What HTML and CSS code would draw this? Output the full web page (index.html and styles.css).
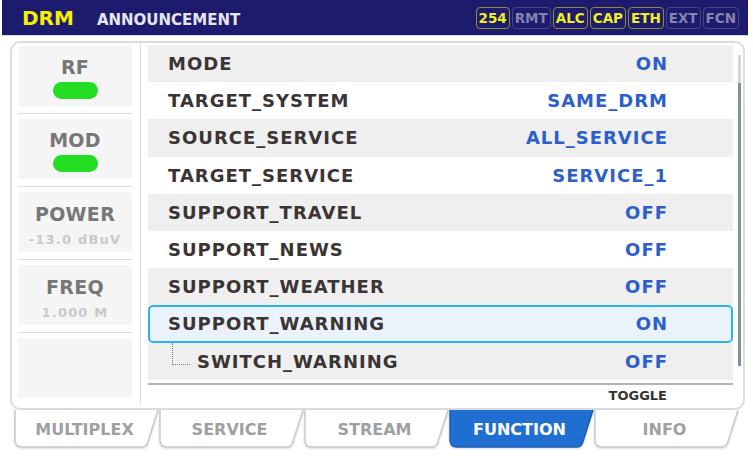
FILE: index.html
```html
<!DOCTYPE html>
<html lang="en">
<head>
    <meta charset="UTF-8">
    <meta name="viewport" content="width=device-width, initial-scale=1.0">
    <title>DRM Announcement</title>
    <link rel="stylesheet" href="styles.css">
</head>
<body>
    <header class="topbar">
        <span class="title">DRM</span>
        <span class="subtitle">ANNOUNCEMENT</span>
        <div class="badges">
            <span class="badge on">254</span>
            <span class="badge">RMT</span>
            <span class="badge on">ALC</span>
            <span class="badge on">CAP</span>
            <span class="badge on">ETH</span>
            <span class="badge">EXT</span>
            <span class="badge">FCN</span>
        </div>
    </header>

    <main class="panel">
        <aside class="status">
            <div class="slot">
                <div class="card led-card">
                    <span class="card-label">RF</span>
                    <span class="led"></span>
                </div>
            </div>
            <div class="slot">
                <div class="card led-card">
                    <span class="card-label">MOD</span>
                    <span class="led"></span>
                </div>
            </div>
            <div class="slot">
                <div class="card info-card">
                    <span class="card-label">POWER</span>
                    <span class="card-value">-13.0 dBuV</span>
                </div>
            </div>
            <div class="slot">
                <div class="card info-card">
                    <span class="card-label">FREQ</span>
                    <span class="card-value">1.000 M</span>
                </div>
            </div>
            <div class="slot">
                <div class="card"></div>
            </div>
        </aside>

        <section class="list">
            <div class="row"><span>MODE</span><span class="val">ON</span></div>
            <div class="row"><span>TARGET_SYSTEM</span><span class="val">SAME_DRM</span></div>
            <div class="row"><span>SOURCE_SERVICE</span><span class="val">ALL_SERVICE</span></div>
            <div class="row"><span>TARGET_SERVICE</span><span class="val">SERVICE_1</span></div>
            <div class="row"><span>SUPPORT_TRAVEL</span><span class="val">OFF</span></div>
            <div class="row"><span>SUPPORT_NEWS</span><span class="val">OFF</span></div>
            <div class="row"><span>SUPPORT_WEATHER</span><span class="val">OFF</span></div>
            <div class="row sel"><span>SUPPORT_WARNING</span><span class="val">ON</span></div>
            <div class="row sub"><span class="branch"></span><span>SWITCH_WARNING</span><span class="val">OFF</span></div>
            <div class="rule"></div>
            <div class="hint">TOGGLE</div>
        </section>

        <div class="scroll"><div class="thumb"></div></div>
    </main>

    <nav class="tabs">
        <div class="tab">
            <svg width="145" height="38" viewBox="0 0 145 38"><path d="M1 0 V30 Q1 37 8 37 H128 Q132 37 133.5 33 L144 0"/></svg>
            <span class="tab-label">MULTIPLEX</span>
        </div>
        <div class="tab">
            <svg width="145" height="38" viewBox="0 0 145 38"><path d="M1 0 V30 Q1 37 8 37 H128 Q132 37 133.5 33 L144 0"/></svg>
            <span class="tab-label">SERVICE</span>
        </div>
        <div class="tab">
            <svg width="145" height="38" viewBox="0 0 145 38"><path d="M1 0 V30 Q1 37 8 37 H128 Q132 37 133.5 33 L144 0"/></svg>
            <span class="tab-label">STREAM</span>
        </div>
        <div class="tab active">
            <svg width="145" height="38" viewBox="0 0 145 38"><path d="M1 0 V30 Q1 37 8 37 H128 Q132 37 133.5 33 L144 0"/></svg>
            <span class="tab-label">FUNCTION</span>
        </div>
        <div class="tab">
            <svg width="145" height="38" viewBox="0 0 145 38"><path d="M1 0 V30 Q1 37 8 37 H128 Q132 37 133.5 33 L144 0"/></svg>
            <span class="tab-label">INFO</span>
        </div>
    </nav>
</body>
</html>
```

FILE: styles.css
```css
body {
    margin: 0;
    width: 753px;
    height: 458px;
    overflow: hidden;
    background: #fff;
    font-family: "DejaVu Sans", Verdana, sans-serif;
    font-weight: bold;
}

/* top bar */
.topbar {
    display: flex;
    align-items: center;
    height: 35px;
    margin: 0 5px 0 2px;
    padding-left: 20px;
    background: #1d1b6e;
    border-bottom: 1px solid #d8d8e4;
}

.title {
    color: #f4f000;
    font-size: 20px;
    margin-right: 23px;
}

.subtitle {
    color: #e6e6ee;
    font-size: 15px;
    margin-top: 5px;
}

.badges {
    display: flex;
    gap: 2px;
    margin-left: auto;
    margin-right: 9px;
}

.badge {
    font-size: 13.5px;
    line-height: 20px;
    padding: 0 2px;
    border: 1px solid #47467e;
    border-radius: 4px;
    color: #8584ad;
}

.badge.on {
    color: #f2ef1c;
    border-color: #8e8b3c;
}

/* main panel */
.panel {
    display: flex;
    box-sizing: border-box;
    width: 735px;
    height: 369px;
    margin: 5px 0 0 10px;
    border: 2px solid #dcdcdc;
    border-radius: 10px;
}

.status {
    width: 114px;
    padding: 3px 8px 0 6px;
    margin-bottom: 4px;
    border-right: 1px solid #dedede;
}

.slot {
    padding-bottom: 7px;
    margin-bottom: 5px;
    border-bottom: 1px solid #dcdcdc;
}

.slot:last-child {
    padding: 0;
    margin: 0;
    border: none;
}

.card {
    display: flex;
    flex-direction: column;
    align-items: center;
    height: 60px;
    box-sizing: border-box;
    background: #f5f5f5;
    border-radius: 3px;
}

.led-card {
    justify-content: flex-end;
    gap: 5px;
    padding-bottom: 7px;
}

.info-card {
    justify-content: center;
    gap: 9px;
    padding-top: 6px;
}

.card-label {
    color: #777;
    font-size: 19px;
    line-height: 20px;
    letter-spacing: 0.3px;
}

.card-value {
    color: #c9c9c9;
    font-size: 13px;
    line-height: 14px;
    letter-spacing: 1.2px;
}

.led {
    width: 45px;
    height: 17px;
    border-radius: 9px;
    background: #22dd22;
}

/* settings list */
.list {
    width: 585px;
    margin: 2px 0 0 7px;
}

.row {
    display: flex;
    align-items: center;
    box-sizing: border-box;
    height: 37.2px;
    padding: 0 65px 0 20px;
    font-size: 18px;
    letter-spacing: 1px;
    color: #3b3434;
}

.row:nth-child(odd) {
    background: #efefef;
}

.row .val {
    margin-left: auto;
    color: #2c5fcc;
}

.row.sel {
    padding: 0 63px 0 18px;
    background: #eaf2fb;
    border: 2px solid #2ab2f2;
    border-radius: 5px;
}

.row.sub {
    padding-left: 24px;
}

.branch {
    align-self: flex-start;
    width: 17px;
    height: 21px;
    margin-right: 7px;
    border-left: 1px dotted #777;
    border-bottom: 1px dotted #777;
}

.rule {
    height: 2px;
    margin-top: 3px;
    background: #b4b4b4;
}

.hint {
    margin-top: 3px;
    padding-right: 66px;
    text-align: right;
    font-size: 13px;
    line-height: 15px;
    color: #333;
}

.scroll {
    display: flex;
    width: 3px;
    margin: 12px 2px 42px 5px;
    background: #cfd6dd;
}

.thumb {
    flex: 1;
    margin-top: 28px;
    background: #7f8fa0;
}

/* bottom tabs */
.tabs {
    display: flex;
    width: 724px;
    height: 38px;
    margin-left: 14px;
}

.tab {
    display: grid;
    width: 145px;
}

.tab > * {
    grid-area: 1 / 1;
}

.tab svg {
    filter: drop-shadow(0 1px 1px rgba(0, 0, 0, 0.15));
}

.tab path {
    fill: #fff;
    stroke: #cacaca;
    stroke-width: 1.5;
}

.tab.active path {
    fill: #1f6fd2;
    stroke: #1b5fb5;
}

.tab-label {
    z-index: 1;
    align-self: center;
    justify-self: center;
    margin-right: 4px;
    font-size: 16px;
    color: #a0a0a0;
}

.tab.active .tab-label {
    color: #fff;
}
```
